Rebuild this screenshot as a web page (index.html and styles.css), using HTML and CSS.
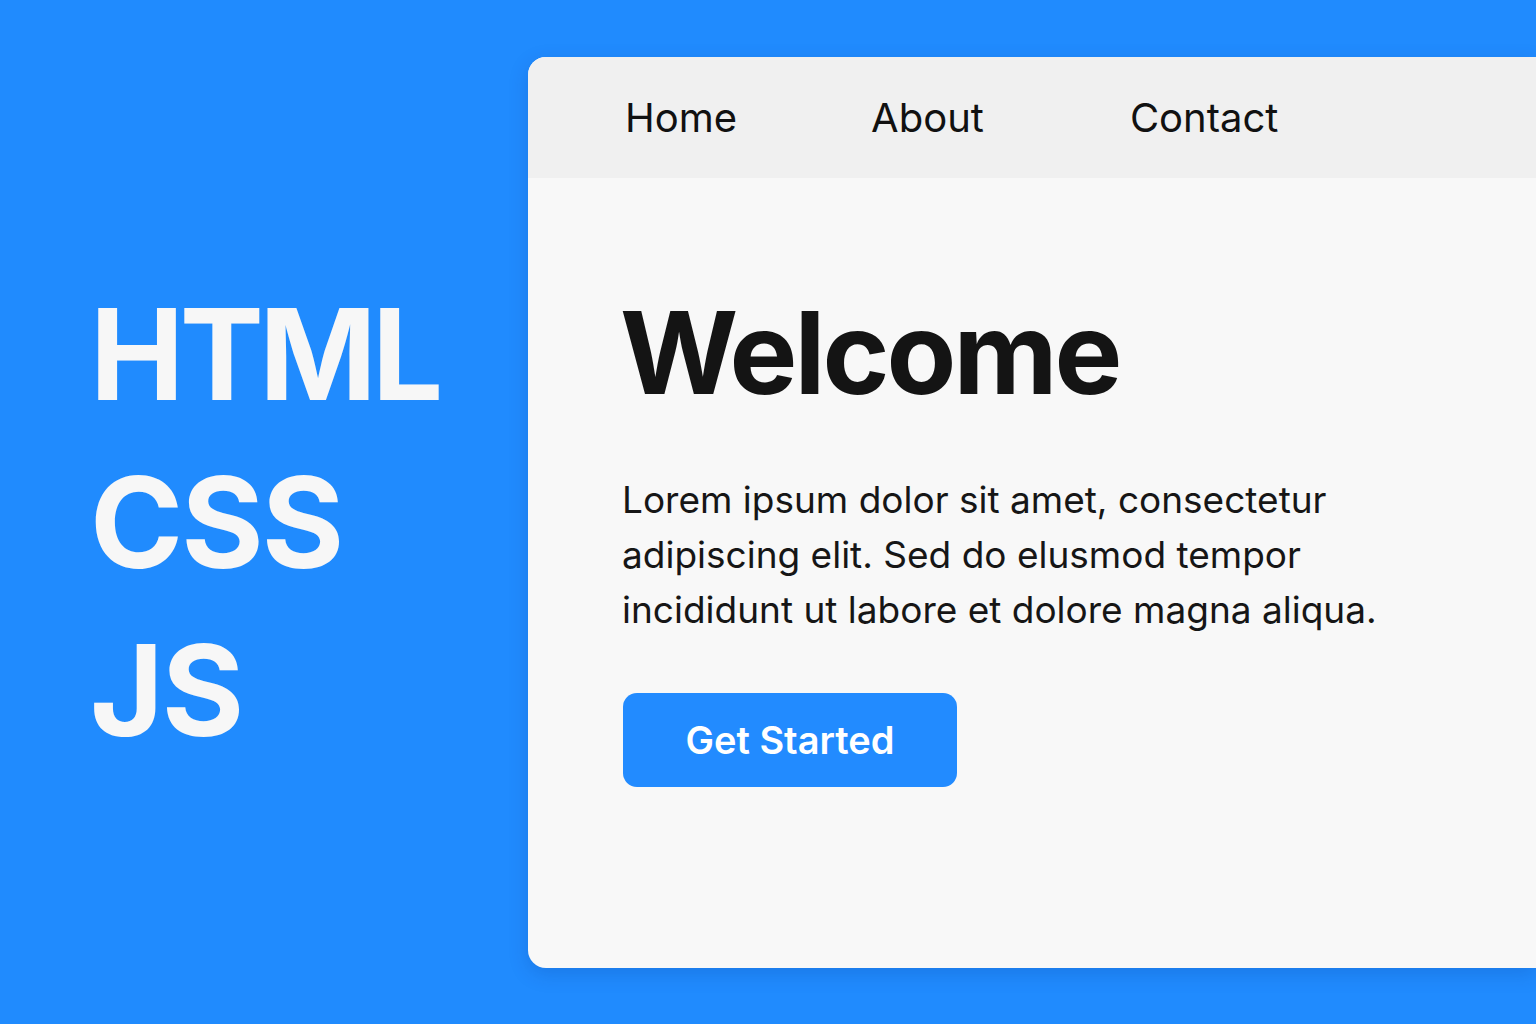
FILE: index.html
```html
<!DOCTYPE html>
<html lang="en">
<head>
	<meta charset="UTF-8">
	<title>HTML CSS JS</title>
	<link rel="stylesheet" href="styles.css">
</head>
<body>
	<div class="stage">
		<ul class="stack">
			<li class="tight">HTML</li>
			<li>CSS</li>
			<li>JS</li>
		</ul>
		<div class="card">
			<ul class="nav">
				<li>Home</li>
				<li>About</li>
				<li class="last">Contact</li>
			</ul>
			<div class="hero">
				<h1>Welcome</h1>
				<p>Lorem ipsum dolor sit amet, consectetur<br>adipiscing elit. Sed do elusmod tempor<br>incididunt ut labore et dolore magna aliqua.</p>
				<a class="btn" href="#">Get Started</a>
			</div>
		</div>
	</div>
</body>
</html>
```

FILE: styles.css
```css
body, div, ul, li, h1, p {
	margin: 0;
	padding: 0;
}
body {
	font-family: Inter, "Liberation Sans", sans-serif;
	background: #208bfe;
	overflow: hidden;
}
ul {
	list-style-type: none;
}
.stage {
	display: flex;
	align-items: flex-start;
	width: 1536px;
	height: 1024px;
}
.stack {
	flex: none;
	width: 438px;
	padding: 270px 0 0 90px;
	color: #f7f7f7;
	font-size: 126px;
	font-weight: 700;
	line-height: 168px;
	letter-spacing: -2px;
}
.stack .tight {
	letter-spacing: -4.5px;
}
.card {
	flex: 1;
	height: 911px;
	margin-top: 57px;
	background: #f8f8f8;
	border-radius: 18px 0 0 18px;
	box-shadow: 0 6px 20px rgba(0, 40, 120, 0.18);
	overflow: hidden;
}
.nav {
	display: flex;
	align-items: center;
	gap: 134px;
	height: 121px;
	padding-left: 97px;
	background: #f0f0f0;
	color: #111;
	font-size: 40px;
}
.nav .last {
	margin-left: 12px;
}
.hero {
	padding: 118px 0 0 94px;
}
.hero h1 {
	margin-left: -2px;
	color: #141414;
	font-size: 114px;
	font-weight: 700;
	line-height: 1;
	letter-spacing: -3px;
}
.hero p {
	margin-top: 62px;
	color: #161616;
	font-size: 37px;
	line-height: 55px;
}
.btn {
	display: inline-flex;
	align-items: center;
	justify-content: center;
	width: 334px;
	height: 94px;
	margin: 56px 0 0 1px;
	border-radius: 14px;
	background: #228bff;
	color: #fff;
	font-size: 38px;
	font-weight: 600;
	text-decoration: none;
}
```
